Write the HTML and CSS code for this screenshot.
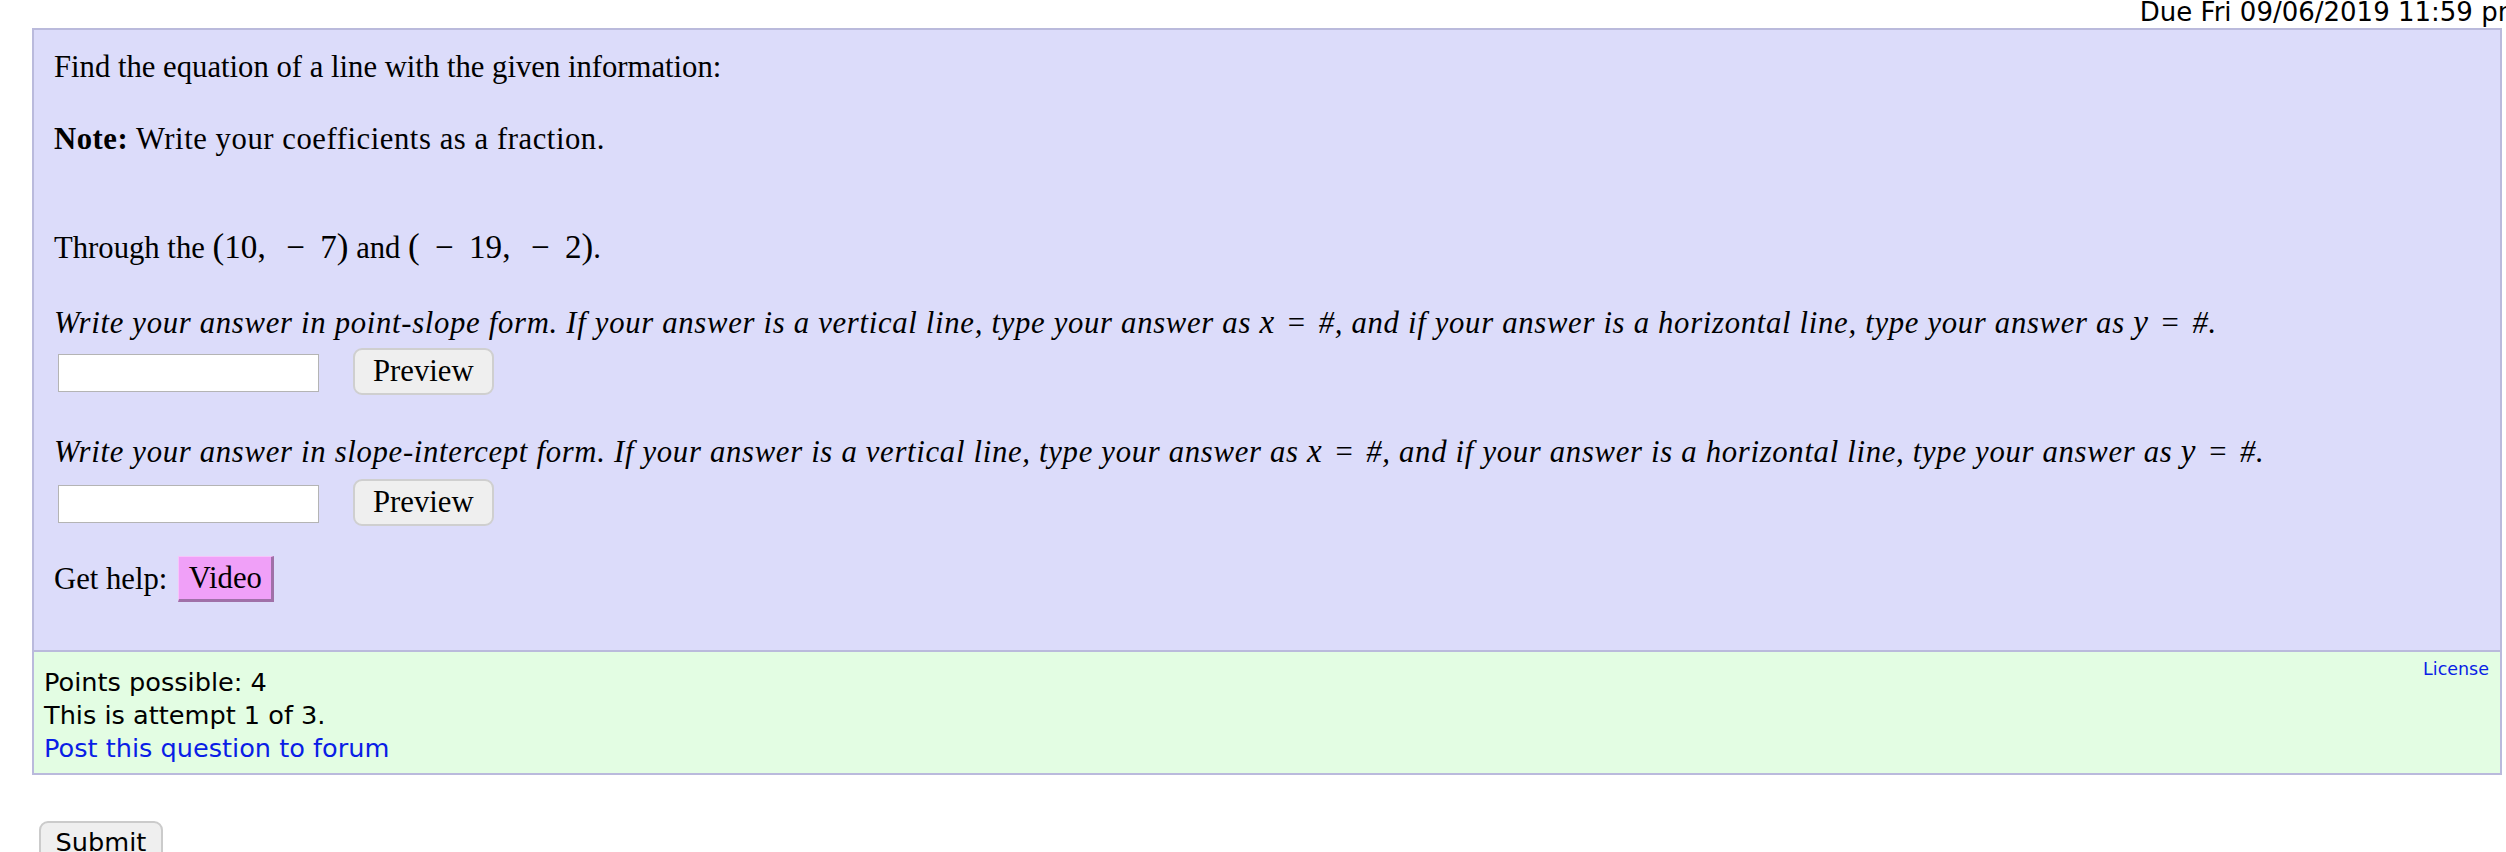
FILE: index.html
```html
<!DOCTYPE html>
<html lang="en">
<head>
    <meta charset="UTF-8">
    <title>Question</title>
    <link rel="stylesheet" href="styles.css">
</head>
<body>
    <div class="due">Due Fri 09/06/2019 11:59 pm</div>

    <div class="question">
        <p class="find">Find the equation of a line with the given information:</p>
        <p class="note"><b>Note:</b> Write your coefficients as a fraction.</p>
        <p class="through">Through the <span class="math"><span class="paren">(</span>10,<span class="comma-gap"></span><span class="bin">−</span>7<span class="paren">)</span></span> and <span class="math"><span class="paren">(</span><span class="bin">−</span>19,<span class="comma-gap"></span><span class="bin">−</span>2<span class="paren">)</span></span>.</p>

        <p class="prompt first"><i>Write your answer in point-slope form. If your answer is a vertical line, type your answer as <span class="mi">x</span><span class="rel">=</span>#, and if your answer is a horizontal line, type your answer as <span class="mi">y</span><span class="rel">=</span>#.</i></p>
        <div class="answer-row">
            <input type="text" class="answer">
            <button class="preview-btn">Preview</button>
        </div>

        <p class="prompt"><i>Write your answer in slope-intercept form. If your answer is a vertical line, type your answer as <span class="mi">x</span><span class="rel">=</span>#, and if your answer is a horizontal line, type your answer as <span class="mi">y</span><span class="rel">=</span>#.</i></p>
        <div class="answer-row second">
            <input type="text" class="answer">
            <button class="preview-btn">Preview</button>
        </div>

        <div class="help-row">
            <span>Get help:</span>
            <button class="video-btn">Video</button>
        </div>
    </div>

    <div class="info">
        <a class="license" href="#">License</a>
        <div>Points possible: 4</div>
        <div>This is attempt 1 of 3.</div>
        <a class="forum" href="#">Post this question to forum</a>
    </div>

    <button class="submit-btn">Submit</button>
</body>
</html>
```

FILE: styles.css
```css
body {
    margin: 0;
    overflow: hidden;
    background: white;
    color: black;
    font-family: "DejaVu Sans", Verdana, sans-serif;
}
.due {
    height: 28px;
    line-height: 24px;
    font-size: 26px;
    text-align: right;
    white-space: nowrap;
    margin-right: -17px;
}
.question {
    margin: 0 4px 0 32px;
    background-color: #dcdcfa;
    border: 2px solid #babadc;
    padding: 20px 20px 48px 20px;
    font-family: "Liberation Serif", "Times New Roman", serif;
    font-size: 30.7px;
    line-height: 35px;
}
.question p {
    margin: 0;
    white-space: nowrap;
}
.note {
    margin-top: 37px !important;
    letter-spacing: 0.55px;
}
.through {
    margin-top: 74px !important;
}
.math {
    font-size: 1.08em;
    line-height: 0;
}
.paren {
    font-size: 1.06em;
    line-height: 0;
}
.bin {
    margin: 0 0.46em;
}
.comma-gap {
    display: inline-block;
    width: 0.16em;
}
.prompt {
    margin-top: 40px !important;
    letter-spacing: 0.7px;
}
.mi {
    font-size: 1.08em;
    line-height: 0;
}
.rel {
    display: inline-block;
    margin: 0 0.42em;
    font-style: normal;
}
.answer-row {
    display: flex;
    align-items: center;
    margin-top: 7px;
}
.answer-row.second {
    margin-top: 9px;
}
.answer {
    width: 261px;
    height: 38px;
    box-sizing: border-box;
    margin: 2px 0 0 4px;
    border: 1px solid #b4b4b4;
    background: white;
    padding: 0;
}
.preview-btn {
    margin-left: 34px;
    height: 47px;
    padding: 0 18px;
    font-family: "Liberation Serif", "Times New Roman", serif;
    font-size: 30.7px;
    background: #efefef;
    border: 2px solid #cfcfcf;
    border-radius: 9px;
    color: black;
}
.help-row {
    display: flex;
    align-items: center;
    margin-top: 30px;
}
.video-btn {
    margin-left: 11px;
    height: 46px;
    width: 96px;
    padding: 0;
    font-family: "Liberation Serif", "Times New Roman", serif;
    font-size: 30.7px;
    background: #f0a0f8;
    border-style: solid;
    border-width: 1px 3px 3px 1px;
    border-color: #f6c4fa #a070a8 #a070a8 #f6c4fa;
    color: black;
}
.info {
    margin: 0 4px 0 32px;
    background-color: #e3fde3;
    border: 2px solid #babadc;
    border-top: none;
    padding: 14px 11px 8px 10px;
    font-size: 25.6px;
    line-height: 33px;
}
.info a {
    color: #0a1ee6;
    text-decoration: none;
}
.license {
    float: right;
    margin-top: -11px;
    font-size: 17.5px;
    line-height: 28px;
}
.submit-btn {
    margin: 46px 0 0 39px;
    width: 124px;
    padding: 4px 0 10px 0;
    font-family: "DejaVu Sans", Verdana, sans-serif;
    font-size: 25.6px;
    line-height: 30px;
    background: #efefef;
    border: 2px solid #cbcbcb;
    border-radius: 9px;
    color: black;
}
```
